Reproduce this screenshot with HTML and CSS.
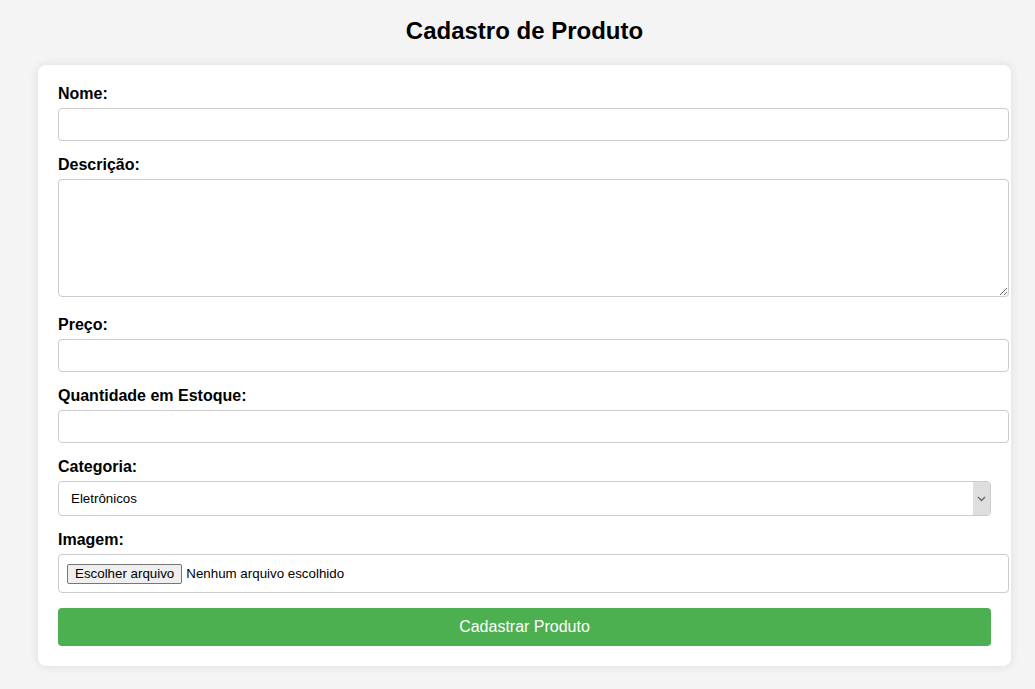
FILE: index.html
```html
<!DOCTYPE html>
<html lang="pt-BR">
<head>
<meta charset="utf-8">
<title>Cadastro de Produto</title>
<link rel="stylesheet" href="styles.css">
</head>
<body>
<div class="page">
  <h1>Cadastro de Produto</h1>
  <form class="card">
    <label class="lbl" for="nome">Nome:</label>
    <input class="field" type="text" id="nome">

    <label class="lbl" for="desc">Descrição:</label>
    <textarea class="field area" id="desc"></textarea>

    <label class="lbl" for="preco">Preço:</label>
    <input class="field" type="text" id="preco">

    <label class="lbl" for="qtd">Quantidade em Estoque:</label>
    <input class="field" type="text" id="qtd">

    <label class="lbl" for="cat">Categoria:</label>
    <div class="select-wrap">
      <select id="cat" class="select">
        <option>Eletrônicos</option>
        <option>Roupas</option>
        <option>Alimentos</option>
      </select>
      <span class="arrow"><svg width="9" height="6" viewBox="0 0 9 6"><path d="M1 1 L4.5 4.5 L8 1" fill="none" stroke="#666" stroke-width="1.3"/></svg></span>
    </div>

    <label class="lbl">Imagem:</label>
    <label class="file">
      <span class="file-btn">Escolher arquivo</span>
      <span class="file-text">Nenhum arquivo escolhido</span>
    </label>

    <button type="button" class="submit">Cadastrar Produto</button>
  </form>
</div>
</body>
</html>
```

FILE: styles.css
```css
html, body {
  margin: 0;
  padding: 0;
  background: #f4f4f4;
  font-family: "Liberation Sans", Arial, sans-serif;
  color: #000;
}

.page {
  margin: 0 24px 0 38px;
  padding-bottom: 20px;
}

h1 {
  margin: 0;
  padding: 17px 0 20px;
  font-size: 24px;
  line-height: 28px;
  font-weight: bold;
  text-align: center;
}

.card {
  background: #fff;
  border-radius: 8px;
  box-shadow: 0 0 10px rgba(0, 0, 0, 0.1);
  padding: 20px;
  display: flex;
  flex-direction: column;
  align-items: flex-start;
}

.lbl {
  display: block;
  font-size: 16px;
  line-height: 18px;
  font-weight: bold;
  margin-bottom: 5px;
}

.field {
  display: block;
  box-sizing: content-box;
  width: 100%;
  padding: 8px;
  border: 1px solid #ccc;
  border-radius: 4px;
  font-family: "Liberation Sans", Arial, sans-serif;
  font-size: 13.33px;
  line-height: 15px;
  margin: 0 0 15px;
  background: #fff;
}

.area {
  height: 100px;
  margin-bottom: 19px;
  resize: vertical;
}

.select-wrap {
  display: flex;
  align-self: stretch;
  height: 35px;
  box-sizing: border-box;
  border: 1px solid #ccc;
  border-radius: 4px;
  margin-bottom: 15px;
  overflow: hidden;
}

.select {
  flex: 1;
  appearance: none;
  -webkit-appearance: none;
  border: 0;
  background: transparent;
  padding: 0 12px;
  font-family: "Liberation Sans", Arial, sans-serif;
  font-size: 13.33px;
  color: #000;
  outline: none;
}

.arrow {
  width: 17px;
  background: #dedede;
  display: flex;
  align-items: center;
  justify-content: center;
}

.file {
  display: flex;
  align-items: center;
  box-sizing: content-box;
  width: 100%;
  padding: 8px;
  border: 1px solid #ccc;
  border-radius: 4px;
  height: 21px;
  margin-bottom: 15px;
  font-size: 13.33px;
}

.file-btn {
  box-sizing: border-box;
  height: 20px;
  line-height: 18px;
  padding: 0 7px;
  border: 1px solid #767676;
  border-radius: 2px;
  background: #efefef;
  color: #000;
  margin-right: 4px;
}

.file-text {
  color: #000;
}

.submit {
  align-self: stretch;
  height: 38px;
  border: 0;
  border-radius: 4px;
  background: #4caf50;
  color: #fff;
  font-family: "Liberation Sans", Arial, sans-serif;
  font-size: 16px;
  cursor: pointer;
}
```
